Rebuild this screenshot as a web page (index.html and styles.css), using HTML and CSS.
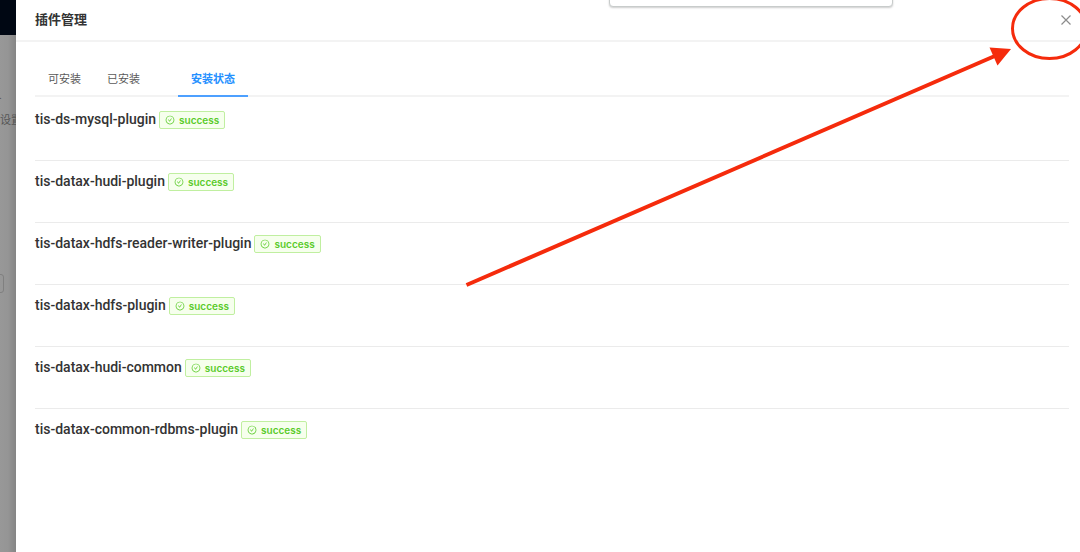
FILE: index.html
```html
<!DOCTYPE html>
<html lang="zh-CN">
<head>
<meta charset="utf-8">
<meta name="viewport" content="width=device-width, initial-scale=1">
<title>插件管理</title>
<link rel="stylesheet" href="styles.css">
</head>
<body>
<svg class="defs" aria-hidden="true">
  <symbol id="check" viewBox="0 0 1024 1024">
    <path d="M699 353h-46.900c-10.200 0-19.900 4.900-25.900 13.300L469 584.300l-71.200-98.800c-6-8.300-15.600-13.300-25.900-13.300H325c-6.500 0-10.300 7.400-6.500 12.700l124.600 172.800a31.800 31.800 0 0 0 51.700 0l210.600-292c3.900-5.300.1-12.700-6.400-12.700z"/>
    <path d="M512 64C264.600 64 64 264.600 64 512s200.600 448 448 448 448-200.600 448-448S759.400 64 512 64zm0 820c-205.400 0-372-166.600-372-372s166.600-372 372-372 372 166.600 372 372-166.600 372-372 372z"/>
  </symbol>
</svg>
<div class="page">
  <div class="backdrop">
    <div class="topbar"></div>
    <span class="crumb">.</span>
    <span class="setting">设置</span>
    <span class="field"></span>
  </div>
  <main class="drawer">
    <header class="drawer-header">
      <h1 class="title">插件管理</h1>
      <button class="close" type="button" aria-label="关闭">
        <svg class="close-icon" viewBox="0 0 10 10"><path d="M0.500 0.500L9.500 9.500M9.500 0.500L0.500 9.500"/></svg>
      </button>
    </header>
    <div class="drawer-body">
      <nav class="tabs" role="tablist">
        <button class="tab" type="button" role="tab" aria-selected="false">可安装</button>
        <button class="tab" type="button" role="tab" aria-selected="false">已安装</button>
        <button class="tab tab-active" type="button" role="tab" aria-selected="true">安装状态</button>
      </nav>
      <ul class="list">
        <li class="row"><span class="name">tis-ds-mysql-plugin</span><span class="tag"><svg class="tag-icon"><use href="#check"/></svg>success</span></li>
        <li class="row"><span class="name">tis-datax-hudi-plugin</span><span class="tag"><svg class="tag-icon"><use href="#check"/></svg>success</span></li>
        <li class="row"><span class="name">tis-datax-hdfs-reader-writer-plugin</span><span class="tag"><svg class="tag-icon"><use href="#check"/></svg>success</span></li>
        <li class="row"><span class="name">tis-datax-hdfs-plugin</span><span class="tag"><svg class="tag-icon"><use href="#check"/></svg>success</span></li>
        <li class="row"><span class="name">tis-datax-hudi-common</span><span class="tag"><svg class="tag-icon"><use href="#check"/></svg>success</span></li>
        <li class="row"><span class="name">tis-datax-common-rdbms-plugin</span><span class="tag"><svg class="tag-icon"><use href="#check"/></svg>success</span></li>
      </ul>
    </div>
  </main>
  <div class="popup"></div>
  <svg class="annotation" viewBox="460 0 620 300" aria-hidden="true">
    <path class="stroke" d="M466.500 285L996 55.500"/>
    <path class="head" d="M1011 49L989.500 47.500L997.500 65.500Z"/>
    <ellipse class="stroke ring" cx="1049.500" cy="28.500" rx="37" ry="30"/>
  </svg>
</div>
</body>
</html>
```
FILE: styles.css
```css
* {
  box-sizing: border-box;
}

body {
  margin: 0;
  font-family: Roboto, "Noto Sans CJK SC", sans-serif;
  color: #333;
}

button {
  margin: 0;
  padding: 0;
  border: 0;
  background: none;
  font: inherit;
  cursor: pointer;
}

.defs {
  position: absolute;
  width: 0;
  height: 0;
}

.page {
  position: relative;
  display: flex;
  min-height: 100vh;
  overflow: hidden;
}

.backdrop {
  position: relative;
  flex: 0 0 16px;
  overflow: hidden;
  background: linear-gradient(to right, #989898, #959595 50%, #858585);
}

.topbar {
  height: 35px;
  background: #000713;
}

.crumb,
.setting,
.field {
  position: absolute;
  left: 0;
  font-size: 11px;
  line-height: 16px;
  color: #555;
  white-space: nowrap;
}

.crumb {
  top: 88px;
  left: -1px;
}

.setting {
  top: 113px;
}

.field {
  top: 274px;
  left: -16px;
  width: 20px;
  height: 19px;
  border: 1px solid #808080;
  border-radius: 3px;
}

.drawer {
  flex: 1;
  min-width: 0;
  background: #fff;
}

.drawer-header {
  display: flex;
  align-items: center;
  justify-content: space-between;
  padding: 10px 9px 10px 19px;
  border-bottom: 2px solid #f3f3f3;
}

.title {
  margin: 0;
  font-size: 13px;
  font-weight: 700;
  line-height: 20px;
}

.close {
  display: flex;
}

.close-icon {
  width: 10px;
  height: 10px;
  fill: none;
  stroke: #8c8c8c;
  stroke-width: 1.2;
}

.drawer-body {
  padding: 20px 11px 20px 19px;
}

.tabs {
  display: flex;
  border-bottom: 2px solid #f3f3f3;
}

.tab {
  margin-bottom: -2px;
  padding: 9px 13px 6px;
  border-bottom: 2px solid transparent;
  font-size: 11px;
  line-height: 18px;
  color: #595959;
}

.tab-active {
  margin-left: 25px;
  border-bottom-color: #4da0ff;
  font-weight: 700;
  color: #2490ff;
}

.list {
  margin: 0;
  padding: 2px 0 0;
  list-style: none;
}

.row {
  display: flex;
  align-items: flex-start;
  gap: 3px;
  padding: 12px 0 31px;
  border-bottom: 1px solid #ebebeb;
}

.row:last-child {
  border-bottom: 0;
}

.name {
  font-size: 14px;
  font-weight: 500;
  line-height: 16px;
}

.tag {
  display: flex;
  align-items: center;
  gap: 4px;
  padding: 0 5px;
  border: 1px solid #c0efa0;
  border-radius: 2px;
  background: #f6ffed;
  font-family: Inter, sans-serif;
  font-size: 10px;
  font-weight: 600;
  line-height: 16px;
  color: #5acb2a;
}

.tag-icon {
  width: 10px;
  height: 10px;
  fill: currentColor;
}

.popup {
  position: absolute;
  top: -10px;
  left: 609px;
  width: 284px;
  height: 17px;
  border: 1px solid #c8cccb;
  border-radius: 4px;
  background: #fff;
  box-shadow: 0 1px 2px rgba(0, 0, 0, 0.2);
}

.annotation {
  position: absolute;
  top: 0;
  right: 0;
  width: 620px;
  height: 300px;
  pointer-events: none;
}

.stroke {
  fill: none;
  stroke: #f52b0c;
  stroke-width: 4;
}

.ring {
  stroke-width: 3;
}

.head {
  fill: #f52b0c;
}
```
